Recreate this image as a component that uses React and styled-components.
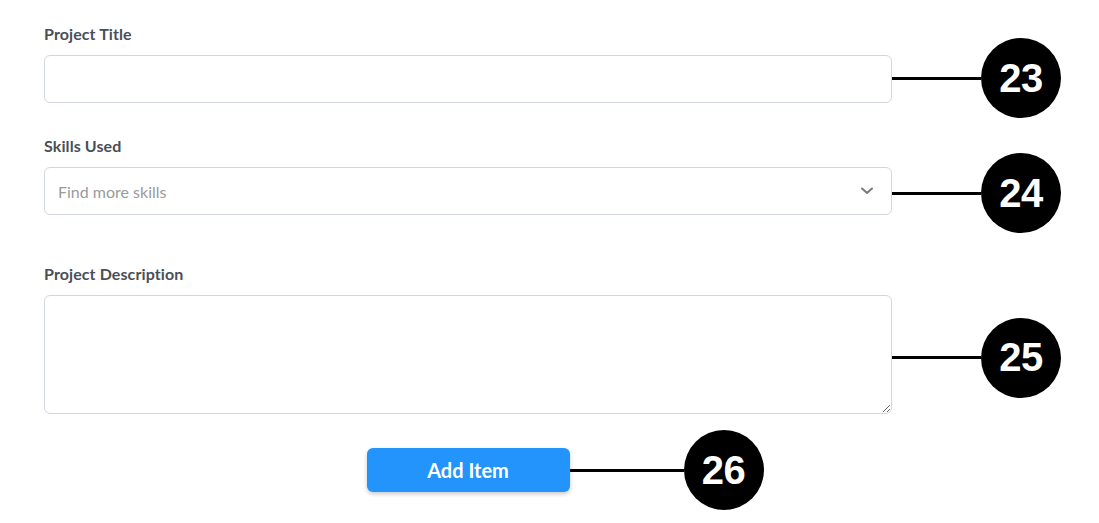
import React from 'react';
import styled, { createGlobalStyle } from 'styled-components';

const GlobalStyle = createGlobalStyle`
  body {
    margin: 0;
    background: #ffffff;
    font-family: Lato, "Noto Sans", sans-serif;
  }
`;

const Page = styled.div`
  box-sizing: border-box;
  min-height: 100vh;
  padding: 24px 0 0 44px;
  width: 1099px;
`;

const Form = styled.div`
  width: 848px;
`;

const FieldGroup = styled.div`
  margin-bottom: ${(p) => p.gap}px;
`;

const Label = styled.label`
  display: block;
  font-size: 16px;
  line-height: 20px;
  font-weight: 700;
  letter-spacing: 0.1px;
  color: #4a4f57;
  margin-bottom: 11px;
`;

const Control = styled.div`
  position: relative;
  width: 848px;
`;

const TextInput = styled.input`
  box-sizing: border-box;
  display: block;
  width: 100%;
  height: 48px;
  border: 1px solid #d2d7dd;
  border-radius: 6px;
  padding: 0 13px;
  font-family: Lato, sans-serif;
  font-size: 16px;
  color: #333;
  outline: none;

  &::placeholder {
    color: #9a9a9a;
  }
`;

const SelectBox = styled.div`
  box-sizing: border-box;
  display: flex;
  align-items: center;
  justify-content: space-between;
  height: 48px;
  border: 1px solid #d2d7dd;
  border-radius: 6px;
  padding: 0 18px 0 13px;
  font-size: 16px;
  color: #9a9a9a;
`;

const TextArea = styled.textarea`
  box-sizing: border-box;
  display: block;
  width: 100%;
  height: 119px;
  border: 1px solid #d2d7dd;
  border-radius: 6px;
  padding: 10px 13px;
  font-family: Lato, sans-serif;
  font-size: 16px;
  outline: none;
  resize: vertical;
`;

const ButtonRow = styled.div`
  display: flex;
  justify-content: center;
`;

const ButtonWrap = styled.div`
  position: relative;
`;

const AddButton = styled.button`
  width: 203px;
  height: 44px;
  border: none;
  border-radius: 6px;
  background: #2294fb;
  color: #ffffff;
  font-family: Lato, sans-serif;
  font-size: 20px;
  font-weight: 700;
  box-shadow: 0 2px 4px rgba(0, 0, 0, 0.22);
  cursor: pointer;
`;

const Callout = styled.div`
  position: absolute;
  left: 100%;
  top: 50%;
  transform: translateY(calc(-50% + ${(p) => p.shift || 0}px));
  display: flex;
  align-items: center;
`;

const Connector = styled.div`
  width: ${(p) => p.length}px;
  height: 3px;
  background: #000;
`;

const Badge = styled.div`
  width: 80px;
  height: 80px;
  border-radius: 50%;
  background: #000;
  color: #fff;
  display: flex;
  align-items: center;
  justify-content: center;
  font-family: "Liberation Sans", Arial, sans-serif;
  font-weight: 700;
  font-size: 40px;
  letter-spacing: -0.5px;
`;

const Chevron = () => (
  <svg width="12" height="8" viewBox="0 0 12 8" fill="none">
    <polyline points="1,1.5 6,6 11,1.5" stroke="#7a7a7a" strokeWidth="2" strokeLinecap="round" strokeLinejoin="round" />
  </svg>
);

const Annotation = ({ n, length = 89, shift }) => (
  <Callout shift={shift}>
    <Connector length={length} />
    <Badge>{n}</Badge>
  </Callout>
);

export default function App() {
  return (
    <>
      <GlobalStyle />
      <Page>
        <Form>
          <FieldGroup gap={33}>
            <Label>Project Title</Label>
            <Control>
              <TextInput type="text" />
              <Annotation n="23" shift={-1} />
            </Control>
          </FieldGroup>

          <FieldGroup gap={49}>
            <Label>Skills Used</Label>
            <Control>
              <SelectBox>
                <span>Find more skills</span>
                <Chevron />
              </SelectBox>
              <Annotation n="24" shift={2} />
            </Control>
          </FieldGroup>

          <FieldGroup gap={34}>
            <Label>Project Description</Label>
            <Control>
              <TextArea />
              <Annotation n="25" shift={3} />
            </Control>
          </FieldGroup>

          <ButtonRow>
            <ButtonWrap>
              <AddButton>Add Item</AddButton>
              <Annotation n="26" length={114} />
            </ButtonWrap>
          </ButtonRow>
        </Form>
      </Page>
    </>
  );
}
